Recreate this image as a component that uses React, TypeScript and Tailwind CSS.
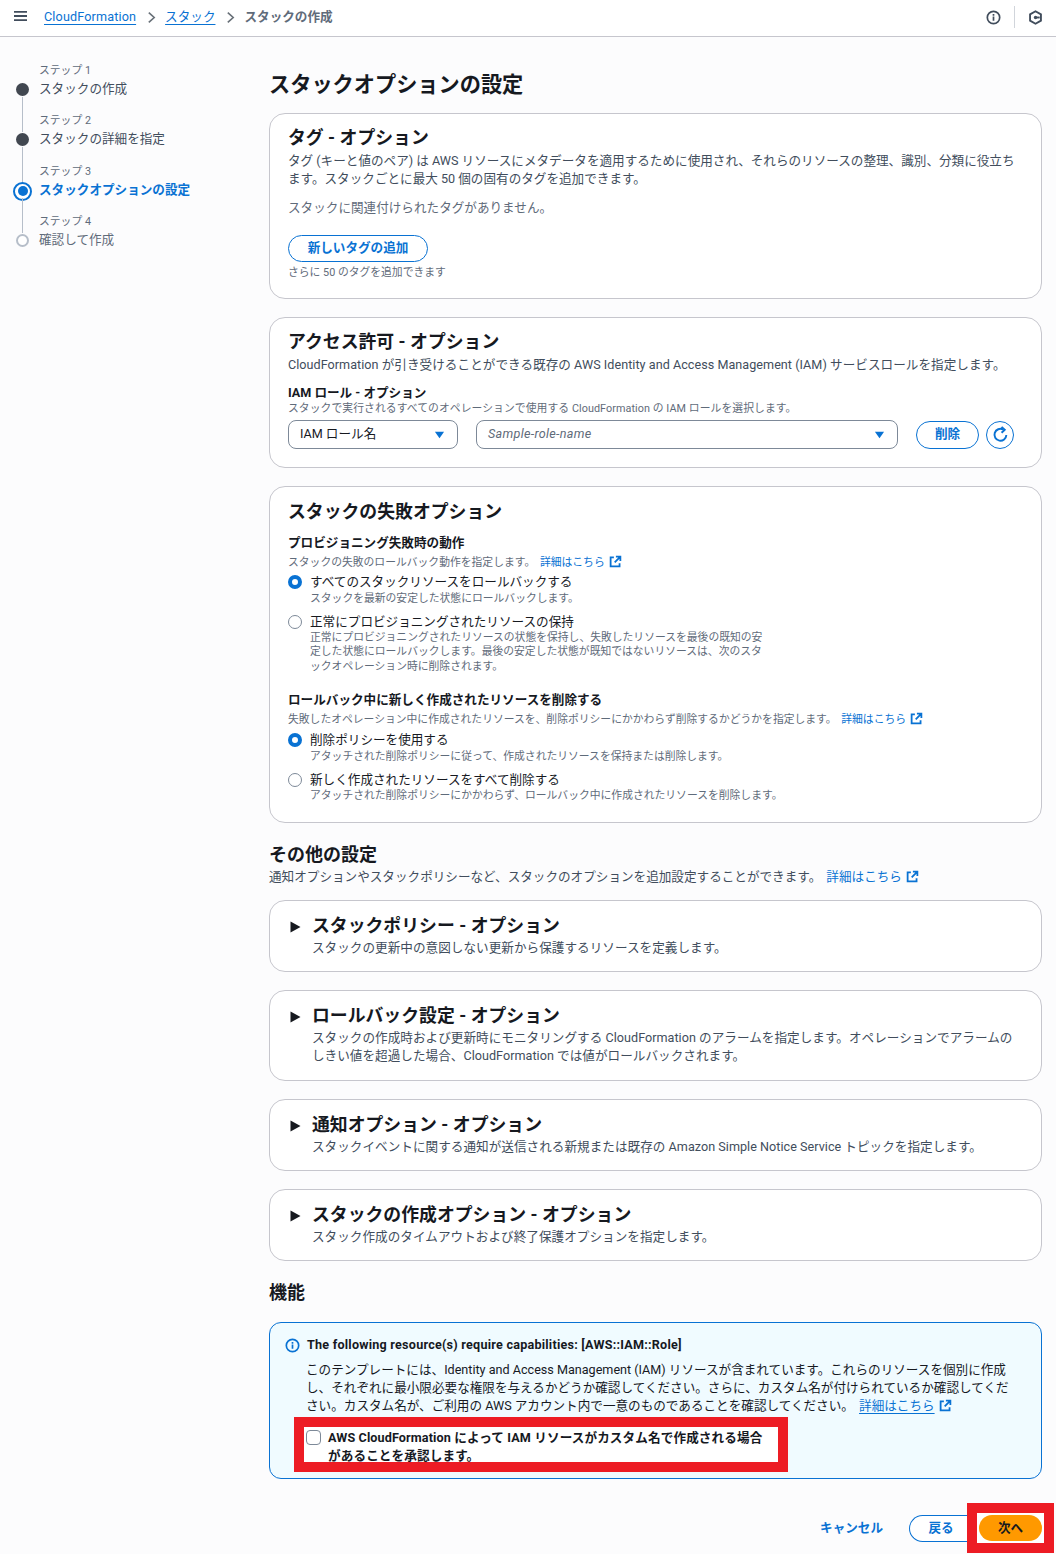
import React from "react";

const FONT = "font-['Roboto','Noto_Sans_CJK_JP',sans-serif]";

function Ext({ className = "" }: { className?: string }) {
  return (
    <svg viewBox="0 0 16 16" className={"inline-block w-[13px] h-[13px] ml-[4px] align-[-2px] " + className} fill="none" stroke="#0972d3" strokeWidth="2.2">
      <path d="M6 3H2v11h11v-4" />
      <path d="M8.5 2H14v5.5M14 2L7 9" />
    </svg>
  );
}

function Link({ children, underline = false }: { children: React.ReactNode; underline?: boolean }) {
  return (
    <span className="text-[#0972d3]">
      <span className={underline ? "underline underline-offset-[3px]" : ""}>{children}</span>
      <Ext />
    </span>
  );
}

function Caret({ className = "" }: { className?: string }) {
  return (
    <svg viewBox="0 0 12 12" className={"w-[11px] h-[11px] " + className} fill="#0972d3">
      <path d="M1 3h10L6 10z" />
    </svg>
  );
}

function Step({ n, label, state, last = false }: { n: number; label: string; state: "done" | "active" | "todo"; last?: boolean }) {
  return (
    <div className={"relative pl-[39px] " + (last ? "" : "h-[50.4px]")}>
      <div className="text-[10.8px] leading-[14px] text-[#5f6b7a]">ステップ {n}</div>
      <div
        className={
          "text-[12.6px] leading-[22px] " +
          (state === "active" ? "font-bold text-[#0972d3]" : state === "done" ? "text-[#414d5c]" : "text-[#5f6b7a]")
        }
      >
        {label}
      </div>
      {state === "done" && <div className="absolute left-[16px] top-[19px] w-[13px] h-[13px] rounded-full bg-[#414750]" />}
      {state === "active" && (
        <div className="absolute left-[13px] top-[17px] w-[19px] h-[19px] rounded-full border-2 border-[#0972d3] bg-white flex items-center justify-center">
          <div className="w-[10px] h-[10px] rounded-full bg-[#0972d3]" />
        </div>
      )}
      {state === "todo" && <div className="absolute left-[16px] top-[19px] w-[13px] h-[13px] rounded-full border-2 border-[#b6bec9] bg-white" />}
      {!last && <div className="absolute left-[22px] top-[33px] h-[35px] w-px bg-[#b6bec9]" />}
    </div>
  );
}

function Card({ children, className = "" }: { children: React.ReactNode; className?: string }) {
  return <section className={"rounded-[16px] border border-[#c6c6cd] bg-white " + className}>{children}</section>;
}

function H3({ children }: { children: React.ReactNode }) {
  return <h3 className="text-[17.85px] leading-[24px] font-bold text-[#16191f]">{children}</h3>;
}

function Radio({ checked, label, desc }: { checked: boolean; label: string; desc: React.ReactNode }) {
  return (
    <div className="flex gap-[8px]">
      <div className={"mt-[2px] w-[14px] h-[14px] shrink-0 rounded-full " + (checked ? "border-[4px] border-[#0972d3] bg-white" : "border border-[#7d8998] bg-white")} />
      <div>
        <div className="text-[12.6px] leading-[17px] text-[#16191f]">{label}</div>
        <div className={"text-[10.8px] leading-[14.5px] text-[#5f6b7a] " + (checked ? "mt-[2px]" : "mt-[1px]")}>{desc}</div>
      </div>
    </div>
  );
}

function Collapsed({ title, children }: { title: string; children: React.ReactNode }) {
  return (
    <Card className="pl-[20px] pr-[22px] pt-[13px] pb-[14.3px] flex gap-[11px]">
      <svg viewBox="0 0 12 12" className="mt-[7px] w-[12px] h-[12px] -ml-[1px] shrink-0" fill="#16191f">
        <path d="M1.5 0.5L11.5 6 1.5 11.5z" />
      </svg>
      <div>
        <H3>{title}</H3>
        <p className="text-[12.6px] leading-[18px] tracking-[0.03px] text-[#414d5c] mt-[1px]">{children}</p>
      </div>
    </Card>
  );
}

export default function App() {
  return (
    <div className={FONT + " w-[1056px] h-[1554px] overflow-hidden bg-[#fcfcfd] text-[#16191f]"}>
      <header className="h-[37px] bg-white border-b border-[#c6c6cd] flex items-center pl-[14px] pr-[13px]">
        <svg viewBox="0 0 14 12" className="w-[13px] h-[12px] -mt-[4px]" stroke="#414d5c" strokeWidth="2">
          <path d="M0 1.5h14M0 6h14M0 10.5h14" />
        </svg>
        <nav className="ml-[17px] flex items-center text-[12.6px] -mt-[1px]">
          <span className="text-[#0972d3] underline underline-offset-[3px] tracking-[0.15px]">CloudFormation</span>
          <svg viewBox="0 0 10 14" className="ml-[11px] mr-[9px] w-[9px] h-[13px]" fill="none" stroke="#687078" strokeWidth="1.8"><path d="M2 1.5L8 7l-6 5.5" /></svg>
          <span className="text-[#0972d3] underline underline-offset-[3px]">スタック</span>
          <svg viewBox="0 0 10 14" className="ml-[11px] mr-[9px] w-[9px] h-[13px]" fill="none" stroke="#687078" strokeWidth="1.8"><path d="M2 1.5L8 7l-6 5.5" /></svg>
          <span className="text-[#5f6b7a] font-bold">スタックの作成</span>
        </nav>
        <div className="ml-auto flex items-center -mt-[2px]">
          <svg viewBox="0 0 16 16" className="w-[15px] h-[15px]" fill="none" stroke="#414d5c" strokeWidth="1.8">
            <circle cx="8" cy="8" r="6.6" />
            <path d="M8 7v4.5M8 4.2v1.8" />
          </svg>
          <div className="mx-[13px] w-px h-[22px] bg-[#d1d5db]" />
          <svg viewBox="0 0 16 16" className="w-[15px] h-[15px]" fill="none" stroke="#414d5c" strokeWidth="2">
            <path d="M8 1.3l5.8 3.3v6.8L8 14.7l-5.8-3.3V4.6z" />
            <path d="M8 8l4.5 0" />
            <circle cx="8" cy="8" r="1.8" fill="#414d5c" stroke="none" />
          </svg>
        </div>
      </header>

      <div className="flex">
        <aside className="w-[270px] shrink-0 pt-[27px]">
          <Step n={1} label="スタックの作成" state="done" />
          <Step n={2} label="スタックの詳細を指定" state="done" />
          <Step n={3} label="スタックオプションの設定" state="active" />
          <Step n={4} label="確認して作成" state="todo" last />
        </aside>

        <main className="w-[773px] -ml-px pt-[33px]">
          <h1 className="text-[21.2px] leading-[30px] font-bold text-[#16191f]">スタックオプションの設定</h1>

          <div className="mt-[13px] flex flex-col gap-[18px]">
            <Card className="h-[186px] pl-[18px] pr-[26px] pt-[12px]">
              <H3>タグ - オプション</H3>
              <p className="mt-[2px] text-[12.6px] leading-[18px] text-[#414d5c]">
                タグ (キーと値のペア) は AWS リソースにメタデータを適用するために使用され、それらのリソースの整理、識別、分類に役立ちます。スタックごとに最大 50 個の固有のタグを追加できます。
              </p>
              <p className="mt-[11px] text-[12.6px] leading-[18px] text-[#5f6b7a]">スタックに関連付けられたタグがありません。</p>
              <button className="mt-[18px] block h-[27px] w-[140px] rounded-full border border-[#0972d3] bg-white text-[12.6px] font-bold text-[#0972d3]">新しいタグの追加</button>
              <p className="mt-[3px] text-[10.8px] leading-[16px] text-[#5f6b7a]">さらに 50 のタグを追加できます</p>
            </Card>

            <Card className="h-[151px] pl-[18px] pr-[27px] pt-[12px]">
              <H3>アクセス許可 - オプション</H3>
              <p className="mt-[2px] text-[12.6px] leading-[18px] tracking-[0.04px] text-[#414d5c]">
                CloudFormation が引き受けることができる既存の AWS Identity and Access Management (IAM) サービスロールを指定します。
              </p>
              <div className="mt-[11px] text-[12.6px] leading-[15px] font-bold text-[#16191f]">IAM ロール - オプション</div>
              <div className="mt-[2px] text-[10.8px] leading-[14px] tracking-[0.07px] text-[#5f6b7a]">スタックで実行されるすべてのオペレーションで使用する CloudFormation の IAM ロールを選択します。</div>
              <div className="mt-[4px] flex items-center">
                <div className="h-[29px] w-[170px] rounded-[8px] border border-[#7d8998] bg-white flex items-center justify-between pl-[11px] pr-[12px] text-[12.6px] text-[#16191f]">
                  IAM ロール名 <Caret />
                </div>
                <div className="ml-[18px] h-[29px] w-[422px] rounded-[8px] border border-[#7d8998] bg-white flex items-center justify-between pl-[11px] pr-[12px] text-[12.6px] italic tracking-[0.3px] text-[#5f6b7a]">
                  Sample-role-name <Caret />
                </div>
                <button className="ml-[18px] h-[28px] w-[63px] rounded-full border border-[#0972d3] bg-white text-[12.6px] font-bold text-[#0972d3]">削除</button>
                <button className="ml-[7px] h-[28px] w-[28px] rounded-full border border-[#0972d3] bg-white flex items-center justify-center">
                  <svg viewBox="0 0 16 16" className="w-[17px] h-[17px]" fill="none" stroke="#0972d3" strokeWidth="1.8">
                    <path d="M13.5 8.5A5.6 5.6 0 1 1 10.5 3.3" />
                    <path d="M9 0.8l3 2.7-3 2.8" />
                  </svg>
                </button>
              </div>
            </Card>

            <Card className="h-[337px] pl-[18px] pr-[26px] pt-[13px]">
              <H3>スタックの失敗オプション</H3>
              <div className="mt-[10px] text-[12.6px] leading-[17px] font-bold text-[#16191f]">プロビジョニング失敗時の動作</div>
              <div className="mt-[4px] text-[10.8px] leading-[16px] text-[#5f6b7a]">
                スタックの失敗のロールバック動作を指定します。 <span className="ml-[2px]"><Link>詳細はこちら</Link></span>
              </div>
              <div className="mt-[2px]">
                <Radio checked label="すべてのスタックリソースをロールバックする" desc="スタックを最新の安定した状態にロールバックします。" />
              </div>
              <div className="mt-[6px]">
                <Radio
                  checked={false}
                  label="正常にプロビジョニングされたリソースの保持"
                  desc={
                    <span className="block w-[460px]">
                      正常にプロビジョニングされたリソースの状態を保持し、失敗したリソースを最後の既知の安定した状態にロールバックします。最後の安定した状態が既知ではないリソースは、次のスタックオペレーション時に削除されます。
                    </span>
                  }
                />
              </div>
              <div className="mt-[17px] text-[12.6px] leading-[17px] font-bold text-[#16191f]">ロールバック中に新しく作成されたリソースを削除する</div>
              <div className="mt-[4px] text-[10.8px] leading-[16px] text-[#5f6b7a]">
                失敗したオペレーション中に作成されたリソースを、削除ポリシーにかかわらず削除するかどうかを指定します。 <span className="ml-[2px]"><Link>詳細はこちら</Link></span>
              </div>
              <div className="mt-[3px]">
                <Radio checked label="削除ポリシーを使用する" desc="アタッチされた削除ポリシーに従って、作成されたリソースを保持または削除します。" />
              </div>
              <div className="mt-[6px]">
                <Radio checked={false} label="新しく作成されたリソースをすべて削除する" desc="アタッチされた削除ポリシーにかかわらず、ロールバック中に作成されたリソースを削除します。" />
              </div>
            </Card>
          </div>

          <h2 className="mt-[19px] text-[18px] leading-[26px] font-bold text-[#16191f]">その他の設定</h2>
          <p className="text-[12.6px] leading-[18px] text-[#414d5c]">
            通知オプションやスタックポリシーなど、スタックのオプションを追加設定することができます。 <span className="ml-[2px]"><Link>詳細はこちら</Link></span>
          </p>

          <div className="mt-[14px] flex flex-col gap-[18px]">
            <Collapsed title="スタックポリシー - オプション">スタックの更新中の意図しない更新から保護するリソースを定義します。</Collapsed>
            <Collapsed title="ロールバック設定 - オプション">
              スタックの作成時および更新時にモニタリングする CloudFormation のアラームを指定します。オペレーションでアラームのしきい値を超過した場合、CloudFormation では値がロールバックされます。
            </Collapsed>
            <Collapsed title="通知オプション - オプション">スタックイベントに関する通知が送信される新規または既存の Amazon Simple Notice Service トピックを指定します。</Collapsed>
            <Collapsed title="スタックの作成オプション - オプション">スタック作成のタイムアウトおよび終了保護オプションを指定します。</Collapsed>
          </div>

          <h2 className="mt-[19px] text-[18px] leading-[26px] font-bold text-[#16191f]">機能</h2>

          <div className="mt-[16px] h-[157px] rounded-[12px] border border-[#0972d3] bg-[#f0fbff] pl-[15px] pr-[26px] pt-[13px]">
            <div className="flex items-center gap-[7px]">
              <svg viewBox="0 0 16 16" className="w-[15px] h-[15px] shrink-0" fill="none" stroke="#0972d3" strokeWidth="1.8">
                <circle cx="8" cy="8" r="6.6" />
                <path d="M8 7v4.5M8 4.2v1.8" />
              </svg>
              <div className="text-[12.6px] leading-[18px] font-bold tracking-[0.23px] text-[#16191f]">The following resource(s) require capabilities: [AWS::IAM::Role]</div>
            </div>
            <p className="mt-[7px] ml-[21px] text-[12.6px] leading-[18px] text-[#16191f]">
              このテンプレートには、Identity and Access Management (IAM) リソースが含まれています。これらのリソースを個別に作成し、それぞれに最小限必要な権限を与えるかどうか確認してください。さらに、カスタム名が付けられているか確認してください。カスタム名が、ご利用の AWS アカウント内で一意のものであることを確認してください。 <span className="ml-[2px]"><Link underline>詳細はこちら</Link></span>
            </p>
            <div className="ml-[9px] mt-[2px] w-[494px] h-[55px] border-[10px] border-[#ed1c24] bg-white flex gap-[7px] overflow-hidden">
              <div className="mt-[3px] ml-[2px] w-[15px] h-[15px] shrink-0 rounded-[4px] border border-[#7d8998] bg-white" />
              <div className="w-[440px] pt-[2px] text-[12.6px] leading-[18px] font-bold tracking-[0.12px] text-[#16191f]">AWS CloudFormation によって IAM リソースがカスタム名で作成される場合があることを承認します。</div>
            </div>
          </div>

          <div className="mt-[24px] -mr-[12px] flex items-center justify-end">
            <span className="text-[12.6px] font-bold text-[#0972d3] mr-[26px]">キャンセル</span>
            <button className="h-[27px] w-[63px] rounded-l-full border border-[#0972d3] border-r-0 bg-white text-[12.6px] font-bold text-[#0972d3] -mr-[5px]">戻る</button>
            <div className="w-[87px] h-[50px] border-[10px] border-[#ed1c24] bg-white flex items-center justify-center">
              <button className="h-[26px] w-[63px] rounded-full bg-[#ff9900] text-[12.6px] font-bold text-[#16191f]">次へ</button>
            </div>
          </div>
        </main>
      </div>
    </div>
  );
}
